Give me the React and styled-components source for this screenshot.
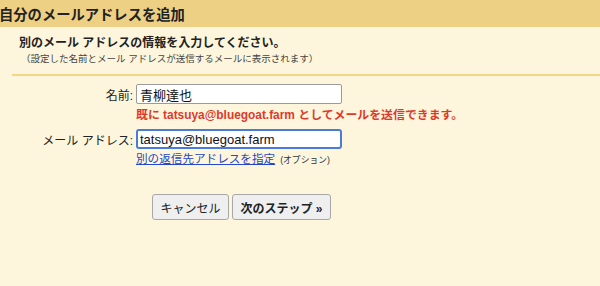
import React from "react";
import styled, { createGlobalStyle } from "styled-components";

const Global = createGlobalStyle`
  html, body { margin: 0; padding: 0; }
  body {
    background: #fdf6dd;
    font-family: "Liberation Sans", Arial, "Noto Sans CJK JP", sans-serif;
    color: #222;
    width: 600px;
    height: 286px;
    overflow: hidden;
  }
`;

const Page = styled.div`
  width: 600px;
  height: 286px;
  background: #fdf6dd;
  display: flex;
  flex-direction: column;
`;

const Header = styled.div`
  height: 27px;
  background: #edd083;
  display: flex;
  align-items: center;
  font-size: 14.3px;
  font-weight: bold;
  color: #222;
  margin-left: -1px;
`;

const Intro = styled.div`
  padding: 8px 0 0 19px;
  height: 39px;
`;

const Title = styled.div`
  font-size: 12px;
  font-weight: bold;
  line-height: 16px;
  color: #222;
`;

const Note = styled.div`
  font-size: 9.5px;
  line-height: 14px;
  color: #444;
  margin-left: 2px;
  margin-top: 1px;
`;

const Rule = styled.div`
  margin-left: 12px;
  height: 2px;
  background: #f3d687;
`;

const Form = styled.div`
  display: grid;
  grid-template-columns: 133px 1fr;
  column-gap: 3px;
  padding-top: 8px;
  align-items: center;
`;

const Label = styled.label`
  text-align: right;
  font-size: 12px;
  color: #222;
`;

const Input = styled.input`
  box-sizing: border-box;
  width: 206px;
  height: 20px;
  margin: 0;
  font-family: "Liberation Sans", Arial, "Noto Sans CJK JP", sans-serif;
  font-size: 13px;
  color: #111;
  background: #fff;
  border: ${(p) => (p.$focused ? "2px solid #4a7bd6" : "1px solid #9a9a9a")};
  padding: 0 ${(p) => (p.$focused ? "2px" : "3px")};
  border-radius: ${(p) => (p.$focused ? "3px" : "2px")};
  outline: none;
`;

const ErrorText = styled.div`
  grid-column: 2;
  font-size: 11.9px;
  font-weight: bold;
  color: #dd3a2c;
  line-height: 14px;
  padding: 4px 0 7px;
  white-space: nowrap;
`;

const LinkRow = styled.div`
  grid-column: 2;
  display: flex;
  align-items: baseline;
  gap: 5px;
  padding-top: 3px;
  line-height: 14px;
`;

const Link = styled.a`
  font-size: 11.6px;
  color: #2546c7;
  text-decoration: underline;
  cursor: pointer;
`;

const Hint = styled.span`
  font-size: 8.8px;
  color: #333;
`;

const Buttons = styled.div`
  display: flex;
  gap: 3px;
  padding: 27px 0 0 152px;
`;

const Button = styled.button`
  box-sizing: border-box;
  height: 26px;
  width: ${(p) => p.$w}px;
  margin: 0;
  padding: 0;
  background: #efefef;
  border: 1px solid #a8a8a8;
  border-radius: 3px;
  font-family: "Liberation Sans", Arial, "Noto Sans CJK JP", sans-serif;
  font-size: 12px;
  font-weight: ${(p) => (p.$primary ? "bold" : "normal")};
  color: #222;
  cursor: pointer;
`;

export default function App() {
  return (
    <>
      <Global />
      <Page>
        <Header>自分のメールアドレスを追加</Header>
        <Intro>
          <Title>別のメール アドレスの情報を入力してください。</Title>
          <Note>（設定した名前とメール アドレスが送信するメールに表示されます）</Note>
        </Intro>
        <Rule />
        <Form>
          <Label>名前:</Label>
          <Input defaultValue="青柳達也" />
          <ErrorText>既に tatsuya@bluegoat.farm としてメールを送信できます。</ErrorText>
          <Label>メール アドレス:</Label>
          <Input $focused defaultValue="tatsuya@bluegoat.farm" />
          <LinkRow>
            <Link>別の返信先アドレスを指定</Link>
            <Hint>(オプション)</Hint>
          </LinkRow>
        </Form>
        <Buttons>
          <Button $w={77}>キャンセル</Button>
          <Button $w={99} $primary>次のステップ »</Button>
        </Buttons>
      </Page>
    </>
  );
}
